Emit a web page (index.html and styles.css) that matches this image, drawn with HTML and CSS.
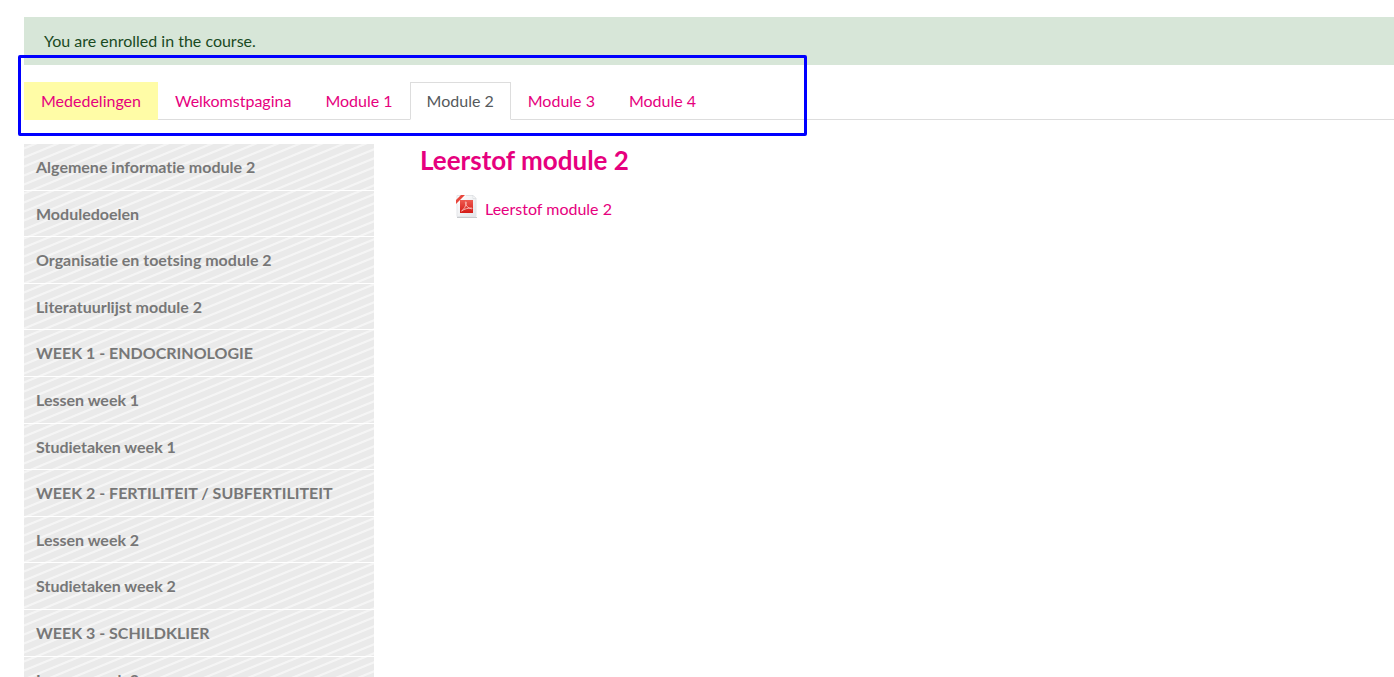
FILE: index.html
```
<!DOCTYPE html>
<html lang="nl">
<head>
<meta charset="utf-8">
<title>Leerstof module 2</title>
<link rel="stylesheet" href="styles.css">
</head>
<body>
<div class="page">
  <div class="alert" role="status">You are enrolled in the course.</div>
  <nav class="tabs" aria-label="Modules">
    <a class="tab tab-marked" href="#mededelingen">Mededelingen</a>
    <a class="tab" href="#welkomstpagina">Welkomstpagina</a>
    <a class="tab" href="#module1">Module 1</a>
    <a class="tab tab-active" href="#module2" aria-current="page">Module 2</a>
    <a class="tab" href="#module3">Module 3</a>
    <a class="tab" href="#module4">Module 4</a>
  </nav>
  <div class="columns">
    <nav class="menu" aria-label="Onderdelen">
      <a class="menu-item" href="#s1">Algemene informatie module 2</a>
      <a class="menu-item" href="#s2">Moduledoelen</a>
      <a class="menu-item" href="#s3">Organisatie en toetsing module 2</a>
      <a class="menu-item" href="#s4">Literatuurlijst module 2</a>
      <a class="menu-item" href="#s5">WEEK 1 - ENDOCRINOLOGIE</a>
      <a class="menu-item" href="#s6">Lessen week 1</a>
      <a class="menu-item" href="#s7">Studietaken week 1</a>
      <a class="menu-item" href="#s8">WEEK 2 - FERTILITEIT / SUBFERTILITEIT</a>
      <a class="menu-item" href="#s9">Lessen week 2</a>
      <a class="menu-item" href="#s10">Studietaken week 2</a>
      <a class="menu-item" href="#s11">WEEK 3 - SCHILDKLIER</a>
      <a class="menu-item" href="#s12">Lessen week 3</a>
    </nav>
    <main class="content">
      <h1 class="title">Leerstof module 2</h1>
      <a class="resource" href="#leerstof">
        <svg class="pdf-icon" viewBox="0 0 24 24" aria-hidden="true">
          <defs>
            <linearGradient id="paper" x1="0" y1="0" x2="1" y2="1"><stop offset="0" stop-color="#fff"/><stop offset="1" stop-color="#e3e5e9"/></linearGradient>
            <linearGradient id="red" x1="0" y1="0" x2="0" y2="1"><stop offset="0" stop-color="#ee5a50"/><stop offset="1" stop-color="#d41a16"/></linearGradient>
          </defs>
          <path d="M2 23.500h20" stroke="#c9cbce"/>
          <path d="M2 1.500h16l3 3v18H2z" fill="url(#paper)" stroke="#e3e5e8"/>
          <path d="M18 1.500v3h3z" fill="#fff" stroke="#d5d8db" stroke-width=".6"/>
          <path d="M9 1h2L2 10V8z" fill="#fff"/>
          <path d="M6 1h4L1 10V6z" fill="#e8463c"/>
          <path d="M5 6h13v13H5z" fill="url(#red)"/>
          <path d="M6.500 17c2.500-1.500 4.500-5 4.800-8.500.1-1-1-1-.9 0 .4 3.200 2.700 5.700 6 6.300 1 .2.900-.9 0-.8-3.500.1-6.800.8-9.900 3z" fill="none" stroke="#f8bdb8" stroke-width=".9"/>
        </svg>
        <span>Leerstof module 2</span>
      </a>
    </main>
  </div>
  <div class="highlight" aria-hidden="true"></div>
</div>
</body>
</html>
```
FILE: styles.css
```
* { box-sizing: border-box; }
body {
  margin: 0;
  background: #fff;
  font: 16px/1.5 Lato, sans-serif;
  font-variant-ligatures: none;
  overflow: hidden;
}
a { color: #e6007e; text-decoration: none; }
.page {
  position: relative;
  height: 100vh;
  padding: 17px 0 0 24px;
  overflow: hidden;
}
.alert {
  padding: 12px 20px;
  background: #d7e6d8;
  color: #1a4a1f;
}
.tabs {
  display: flex;
  margin-top: 17px;
  border-bottom: 1px solid #ddd;
}
.tab {
  margin-bottom: -1px;
  padding: 6px 16px;
  border: 1px solid transparent;
}
.tab-marked { background: #fffca6; border-color: #fffca6; }
.tab-active {
  background: #fff;
  border-color: #ddd #ddd #fff;
  color: #55595c;
}
.columns {
  display: flex;
  gap: 46px;
  margin-top: 24px;
}
.menu {
  flex: none;
  width: 350px;
  background: repeating-linear-gradient(to bottom right, #eaeaea 0 16%, #f5f5f5 21% 29%, #eaeaea 34% 50%);
  background-size: 22px 9px;
}
.menu-item {
  display: block;
  padding: 10px 12px;
  border-bottom: 1px solid #fff;
  color: #777;
  font-weight: 700;
  line-height: 1.6;
}
.content { flex: 1; }
.title {
  margin: 0;
  color: #e6007e;
  font-size: 26px;
  line-height: 32px;
}
.resource {
  display: flex;
  align-items: flex-start;
  gap: 6px;
  margin: 18px 0 0 35px;
}
.resource span { padding-top: 3px; }
.pdf-icon { width: 24px; height: 24px; }
.highlight {
  position: absolute;
  left: 18px;
  top: 55px;
  width: 789px;
  height: 81px;
  border: 3px solid #00f;
  border-radius: 2px;
  pointer-events: none;
}
```
